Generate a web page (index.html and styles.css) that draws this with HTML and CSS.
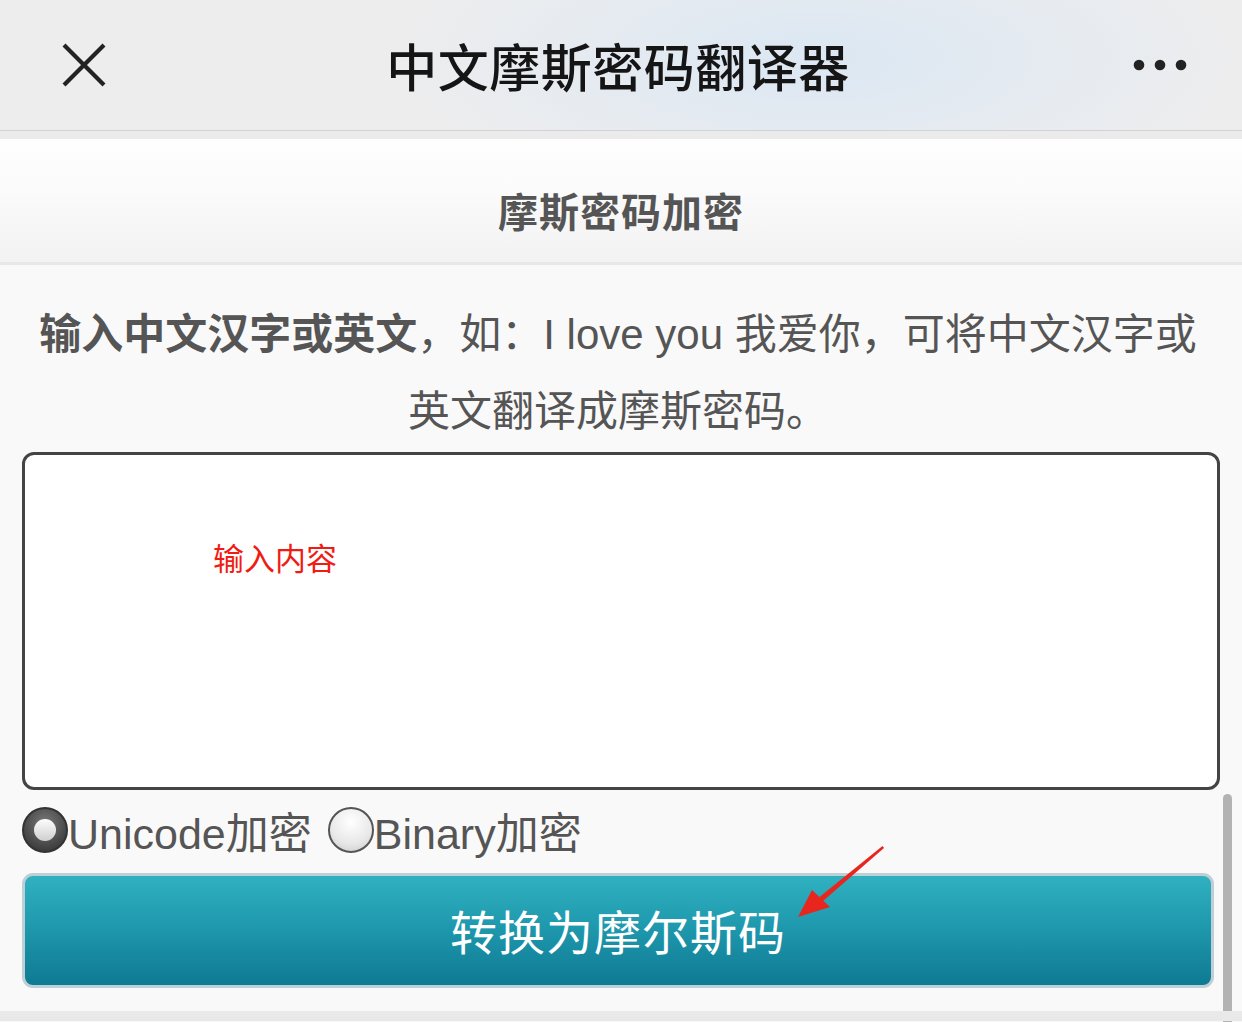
FILE: index.html
```html
<!DOCTYPE html>
<html lang="zh-CN">
<head>
<meta charset="utf-8">
<title>中文摩斯密码翻译器</title>
<link rel="stylesheet" href="styles.css">
</head>
<body>
<header class="topbar">
  <svg class="icon-close" width="46" height="44" viewBox="0 0 46 44" aria-label="关闭">
    <path d="M3 2 L43 42 M43 2 L3 42" stroke="#222" stroke-width="4.2" stroke-linecap="butt" fill="none"/>
  </svg>
  <h1 class="title">中文摩斯密码翻译器</h1>
  <svg class="icon-more" width="56" height="12" viewBox="0 0 56 12" aria-label="更多">
    <circle cx="6" cy="6" r="5.3" fill="#222"/>
    <circle cx="27" cy="6" r="5.3" fill="#222"/>
    <circle cx="48" cy="6" r="5.3" fill="#222"/>
  </svg>
</header>
<div class="gap"></div>
<main class="panel">
  <div class="sec-head">摩斯密码加密</div>
  <div class="content">
    <p class="intro"><b>输入中文汉字或英文</b>，如：I love you 我爱你，可将中文汉字或英文翻译成摩斯密码。</p>
    <div class="editor"><span class="placeholder">输入内容</span></div>
    <div class="radios">
      <label class="radio"><span class="dot on"></span>Unicode加密</label>
      <label class="radio"><span class="dot"></span>Binary加密</label>
    </div>
    <button class="convert">转换为摩尔斯码</button>
  </div>
  <div class="scrollbar"></div>
  <svg class="arrow" width="100" height="80" viewBox="0 0 100 80">
    <path d="M86.5 1 L88 3 L27 56 L23.5 52 Z" fill="#e8261d"/>
    <path d="M2 72 L16 45 L34 62 Z" fill="#e8261d"/>
  </svg>
</main>
<div class="bottom"></div>
</body>
</html>
```

FILE: styles.css
```css
html, body {
  margin: 0;
  padding: 0;
}
body {
  width: 1242px;
  height: 1022px;
  overflow: hidden;
  background: #f8f7f7;
  font-family: "Liberation Sans", "Noto Sans CJK SC", sans-serif;
}
.topbar {
  height: 131px;
  border-bottom: 1px solid #d2d2d4;
  background:
    radial-gradient(ellipse 420px 150px at 66% 45%, #dbe7f3 0%, rgba(221,232,243,0.6) 45%, rgba(236,236,237,0) 100%),
    #ededee;
  display: flex;
  align-items: center;
  justify-content: space-between;
  padding: 0 53px 0 61px;
  box-sizing: border-box;
}
.icon-close {
  display: block;
}
.title {
  margin: 0 4px 0 0;
  font-family: "Noto Sans CJK SC", sans-serif;
  font-weight: 500;
  font-size: 51px;
  letter-spacing: 0.5px;
  color: #151515;
  line-height: 1;
}
.icon-more {
  display: block;
}
.gap {
  height: 8px;
  background: #ebebeb;
}
.panel {
  position: relative;
  background: #faf9f9;
  height: 872px;
}
.sec-head {
  height: 126px;
  border-bottom: 3px solid #e8e8e8;
  background: linear-gradient(#fefefe 0%, #fbfbfb 40%, #f2f2f2 100%);
  display: flex;
  align-items: center;
  justify-content: center;
  padding-top: 18px;
  box-sizing: border-box;
  font-family: "Noto Sans CJK SC", sans-serif;
  font-weight: 700;
  font-size: 40px;
  color: #555;
  letter-spacing: 1px;
}
.content {
  padding: 0 28px 0 22px;
}
.intro {
  margin: 0;
  padding-top: 27px;
  text-align: center;
  font-size: 42px;
  line-height: 77px;
  color: #555;
  font-family: "Liberation Sans", "Noto Sans CJK SC", sans-serif;
}
.intro b {
  font-family: "Noto Sans CJK SC", sans-serif;
  font-weight: 700;
}
.editor {
  margin-top: 2px;
  margin-right: -6px;
  height: 338px;
  box-sizing: border-box;
  border: 3px solid #444;
  border-radius: 12px;
  background: #fff;
  padding: 84px 0 0 188px;
}
.placeholder {
  font-family: "Noto Sans CJK SC", sans-serif;
  font-size: 31px;
  line-height: 36px;
  color: #f01c14;
}
.radios {
  display: flex;
  align-items: center;
  height: 80px;
  gap: 16px;
  font-family: "Liberation Sans", "Noto Sans CJK SC", sans-serif;
  font-size: 43px;
  color: #555;
}
.radio {
  display: flex;
  align-items: center;
}
.dot {
  width: 46px;
  height: 46px;
  border-radius: 50%;
  box-sizing: border-box;
  border: 2px solid #555;
  background: radial-gradient(circle at 50% 30%, #ffffff 0%, #e8e8e8 60%, #c8c8c8 100%);
  display: flex;
  align-items: center;
  justify-content: center;
}
.dot.on {
  border-color: #333;
  background: radial-gradient(circle at 50% 35%, #7a7a7a 0%, #4a4a4a 60%, #2e2e2e 100%);
}
.dot.on::after {
  content: "";
  width: 22px;
  height: 22px;
  border-radius: 50%;
  background: linear-gradient(#fdfdfd, #cfcfcf);
}
.convert {
  display: block;
  width: 100%;
  height: 115px;
  margin-top: 3px;
  box-sizing: border-box;
  border: 3px solid #bfcfd6;
  border-radius: 11px;
  background: linear-gradient(#30b1c0 0%, #1f99ae 45%, #0e7a93 100%);
  color: #fff;
  font-family: "Noto Sans CJK SC", sans-serif;
  font-size: 47px;
  letter-spacing: 1px;
  padding: 0 0 2px 0;
}
.scrollbar {
  position: absolute;
  left: 1223px;
  top: 655px;
  width: 9px;
  height: 240px;
  border-radius: 5px 5px 0 0;
  background: #b3b3b3;
}
.arrow {
  position: absolute;
  left: 796px;
  top: 706px;
}
.bottom {
  position: relative;
  height: 10px;
  background: #e9e9e9;
}
```
